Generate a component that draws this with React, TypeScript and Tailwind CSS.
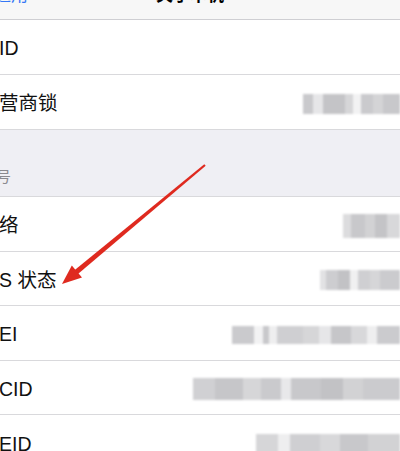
import React from "react";

type Blk = { w: number; c: string };

const Blur = ({ blocks, h }: { blocks: Blk[]; h: number }) => (
  <div className="flex items-center blur-[1.2px]">
    {blocks.map((b, i) => (
      <span key={i} style={{ width: b.w, height: h, background: b.c }} />
    ))}
  </div>
);

const Row = ({
  label,
  value,
  last,
}: {
  label: string;
  value?: React.ReactNode;
  last?: boolean;
}) => (
  <div className={`flex h-[54.5px] items-center justify-between bg-white pt-[4px] ${last ? "" : "border-b border-[#d9d9dc]"}`}>
    <span className="text-[19.5px] text-[#111] leading-none -ml-[1px]">{label}</span>
    <div className="flex justify-end">{value}</div>
  </div>
);

export default function App() {
  return (
    <div className="relative w-[400px] h-[451px] overflow-hidden bg-[#efeff4] font-['Liberation_Sans','Noto_Sans_CJK_SC',sans-serif]">
      {/* nav bar */}
      <div className="h-[20px] overflow-hidden bg-[#f7f7f7] border-b border-[#cfcfd3] relative">
        <div className="flex justify-between -mt-[14px] text-[17px] leading-[20px]">
          <span className="text-[#3478f6] -ml-[6px]">通用</span>
          <span className="font-semibold text-black absolute left-[156px] top-[-14px]">关于本机</span>
        </div>
      </div>

      <div className="bg-white">
        <Row label="ID" />
        <Row
          label="营商锁"
          last
          value={
            <Blur
              h={20}
              blocks={[
                { w: 10, c: "#c9c9cc" },
                { w: 10, c: "#e6e6e8" },
                { w: 22, c: "#c4c4c7" },
                { w: 8, c: "#d6d6d8" },
                { w: 8, c: "#f2f2f3" },
                { w: 12, c: "#cacacd" },
                { w: 10, c: "#d4d4d6" },
                { w: 17, c: "#c8c8cb" },
              ]}
            />
          }
        />
      </div>

      <div className="h-[68px] border-t border-[#d9d9dc] border-b flex items-end pb-[8px]">
        <span className="text-[15px] text-[#8a8a8f] -ml-[4px]">号</span>
      </div>

      <div className="bg-white">
        <Row
          label="络"
          value={
            <Blur
              h={24}
              blocks={[
                { w: 8, c: "#dcdcde" },
                { w: 14, c: "#c8c8cb" },
                { w: 10, c: "#d2d2d4" },
                { w: 12, c: "#c4c4c7" },
                { w: 13, c: "#d8d8da" },
              ]}
            />
          }
        />
        <Row
          label="S 状态"
          value={
            <Blur
              h={20}
              blocks={[
                { w: 6, c: "#e2e2e4" },
                { w: 12, c: "#cdcdd0" },
                { w: 12, c: "#c2c2c5" },
                { w: 8, c: "#f0f0f1" },
                { w: 12, c: "#cfcfd2" },
                { w: 10, c: "#d6d6d8" },
                { w: 20, c: "#cbcbce" },
              ]}
            />
          }
        />
        <Row
          label="EI"
          value={
            <Blur
              h={18}
              blocks={[
                { w: 22, c: "#cacacd" },
                { w: 9, c: "#f2f2f3" },
                { w: 6, c: "#c8c8cb" },
                { w: 8, c: "#eeeeef" },
                { w: 26, c: "#cfcfd2" },
                { w: 16, c: "#d6d6d8" },
                { w: 12, c: "#e6e6e8" },
                { w: 20, c: "#c6c6c9" },
                { w: 16, c: "#d8d8da" },
                { w: 10, c: "#eeeeef" },
                { w: 23, c: "#cbcbce" },
              ]}
            />
          }
        />
        <Row
          label="CID"
          value={
            <Blur
              h={22}
              blocks={[
                { w: 22, c: "#d0d0d3" },
                { w: 28, c: "#c6c6c9" },
                { w: 18, c: "#d6d6d8" },
                { w: 20, c: "#cacacd" },
                { w: 10, c: "#e8e8ea" },
                { w: 30, c: "#c8c8cb" },
                { w: 22, c: "#c2c2c5" },
                { w: 20, c: "#d2d2d4" },
                { w: 37, c: "#cbcbce" },
              ]}
            />
          }
        />
        <Row
          label="EID"
          last
          value={
            <Blur
              h={20}
              blocks={[
                { w: 22, c: "#d6d6d8" },
                { w: 12, c: "#eeeeef" },
                { w: 30, c: "#cfcfd2" },
                { w: 20, c: "#d8d8da" },
                { w: 28, c: "#c8c8cb" },
                { w: 32, c: "#d2d2d4" },
              ]}
            />
          }
        />
      </div>

      {/* annotation arrow */}
      <svg className="absolute left-0 top-0 pointer-events-none" width="400" height="451" viewBox="0 0 400 451">
        <polygon points="205.7,165.7 204.3,164.3 72,272.2 75.6,276" fill="#df2a1f" />
        <polygon points="62,284 71.8,265.6 82,277.6" fill="#df2a1f" />
      </svg>
    </div>
  );
}
